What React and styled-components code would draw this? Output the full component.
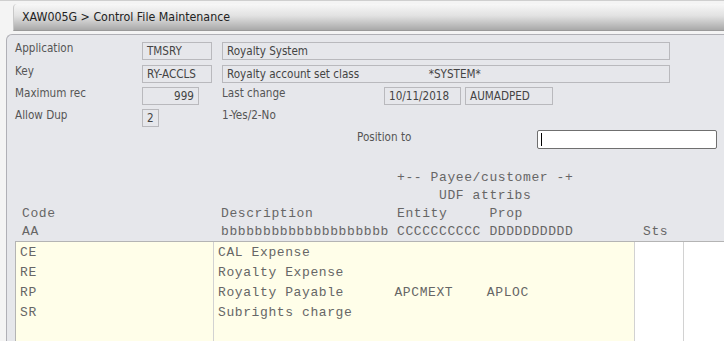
import React from "react";
import styled, { createGlobalStyle } from "styled-components";

const Global = createGlobalStyle`
  html, body { margin: 0; padding: 0; background: #f4f4f4; overflow: hidden; }
  body { font-family: "DejaVu Sans Condensed", "DejaVu Sans", sans-serif; }
`;

const Page = styled.div`
  width: 724px;
  height: 341px;
  display: flex;
  flex-direction: column;
  border-top: 1px solid #cfcfcf;
  box-sizing: border-box;
`;

const TitleBar = styled.div`
  margin: 3px 0 0 13px;
  height: 26px;
  border-radius: 4px 0 0 0;
  border-left: 1px solid #c8c8c8;
  border-bottom: 1px solid #9a9a9a;
  background: linear-gradient(#f7f7f7 0%, #e2e2e2 45%, #a9a9a9 100%);
  display: flex;
  align-items: center;
  padding-left: 8px;
  font-family: "DejaVu Sans Condensed", "DejaVu Sans", sans-serif;
  font-size: 12.3px;
  color: #222;
`;

const Panel = styled.div`
  flex: 1;
  margin: 3px 0 0 6px;
  border-top: 1px solid #b0b0b6;
  border-left: 1px solid #b0b0b6;
  border-radius: 6px 0 0 0;
  background: #e6e7eb;
  padding: 7px 0 0 8px;
  display: flex;
  flex-direction: column;
`;

const Row = styled.div`
  display: flex;
  align-items: flex-start;
  height: ${(p) => p.$h || 22}px;
  font-family: "DejaVu Sans Condensed", "DejaVu Sans", sans-serif;
  font-size: 11.6px;
  line-height: 13px;
  color: #555;
`;

const Label = styled.div`
  width: ${(p) => p.$w || 127}px;
  flex: none;
  margin-left: ${(p) => p.$ml || 0}px;
  margin-top: ${(p) => p.$mt ?? 0}px;
`;

const Box = styled.div`
  width: ${(p) => p.$w}px;
  height: ${(p) => p.$h || 18}px;
  box-sizing: border-box;
  flex: none;
  margin-left: ${(p) => p.$ml || 0}px;
  border: 1px solid #b9b9bd;
  background: #e6e7eb;
  color: #444;
  display: flex;
  align-items: center;
  justify-content: ${(p) => (p.$right ? "flex-end" : "flex-start")};
  padding: 0 4px;
  white-space: pre;
`;

const PosInput = styled.div`
  width: 180px;
  height: 19px;
  box-sizing: border-box;
  border: 1px solid #6f6f6f;
  border-radius: 2px;
  background: #fff;
  display: flex;
  align-items: center;
  padding-left: 3px;
`;

const Caret = styled.div`
  width: 1px;
  height: 13px;
  background: #000;
`;

const Mono = styled.div`
  font-family: "Liberation Mono", "Courier New", monospace;
  font-size: 13px;
  letter-spacing: 0.6px;
  color: #666;
  line-height: 18px;
  white-space: pre;
`;

const HeadBlock = styled(Mono)`
  margin-top: 20px;
  padding-left: 7px;
`;

const HeadLine = styled.div`
  display: grid;
  grid-template-columns: 199px 176px 246px 1fr;
  height: 18px;
`;

const Cell = styled.span`
  grid-column: ${(p) => p.$c};
  padding-left: ${(p) => p.$pl || 0}px;
`;

const Table = styled(Mono)`
  flex: 1;
  border-top: 1px solid #b4b4b4;
  border-left: 1px solid #b4b4b4;
  display: grid;
  grid-template-columns: 198px 421px 49px 1fr;
`;

const Col = styled.div`
  background: ${(p) => (p.$yellow ? "#fffee9" : "#ffffff")};
  border-right: ${(p) => (p.$last ? "none" : "1px solid #d2d2d2")};
  padding-top: 1px;
`;

const DataRow = styled.div`
  height: 20px;
  line-height: 20px;
  padding-left: ${(p) => p.$pl}px;
`;

const rows = [
  { code: "CE", desc: "CAL Expense", ent: "", prop: "" },
  { code: "RE", desc: "Royalty Expense", ent: "", prop: "" },
  { code: "RP", desc: "Royalty Payable", ent: "APCMEXT", prop: "APLOC" },
  { code: "SR", desc: "Subrights charge", ent: "", prop: "" },
];

const pad = (s, n) => s + " ".repeat(Math.max(0, n - s.length));

export default function App() {
  return (
    <>
      <Global />
      <Page>
        <TitleBar>XAW005G &gt; Control File Maintenance</TitleBar>
        <Panel>
          <Row $h={23}>
            <Label>Application</Label>
            <Box $w={70}>TMSRY</Box>
            <Box $w={448} $ml={10}>Royalty System</Box>
          </Row>
          <Row $h={22}>
            <Label>Key</Label>
            <Box $w={70}>RY-ACCLS</Box>
            <Box $w={448} $ml={10}>{"Royalty account set class                     *SYSTEM*"}</Box>
          </Row>
          <Row $h={22}>
            <Label>Maximum rec</Label>
            <Box $w={57} $right>999</Box>
            <Label $w={162} $ml={23}>Last change</Label>
            <Box $w={77}>10/11/2018</Box>
            <Box $w={88} $ml={4}>AUMADPED</Box>
          </Row>
          <Row $h={21}>
            <Label>Allow Dup</Label>
            <Box $w={17}>2</Box>
            <Label $w={200} $ml={63}>1-Yes/2-No</Label>
          </Row>
          <Row $h={19}>
            <Label $w={180} $ml={342} $mt={1}>Position to</Label>
            <PosInput>
              <Caret />
            </PosInput>
          </Row>
          <HeadBlock>
            <HeadLine>
              <Cell $c={3}>+-- Payee/customer -+</Cell>
            </HeadLine>
            <HeadLine>
              <Cell $c={3} $pl={42}>UDF attribs</Cell>
            </HeadLine>
            <HeadLine>
              <Cell $c={1}>Code</Cell>
              <Cell $c={2}>Description</Cell>
              <Cell $c={3}>Entity     Prop</Cell>
            </HeadLine>
            <HeadLine>
              <Cell $c={1}>AA</Cell>
              <Cell $c={2}>bbbbbbbbbbbbbbbbbbbb</Cell>
              <Cell $c={3}>CCCCCCCCCC DDDDDDDDDD</Cell>
              <Cell $c={4}>Sts</Cell>
            </HeadLine>
          </HeadBlock>
          <Table>
            <Col $yellow>
              {rows.map((r) => (
                <DataRow key={r.code} $pl={4}>{r.code}</DataRow>
              ))}
            </Col>
            <Col $yellow>
              {rows.map((r) => (
                <DataRow key={r.code} $pl={4}>
                  {r.ent ? pad(r.desc, 21) + pad(r.ent, 11) + r.prop : r.desc}
                </DataRow>
              ))}
            </Col>
            <Col />
            <Col $last />
          </Table>
        </Panel>
      </Page>
    </>
  );
}
